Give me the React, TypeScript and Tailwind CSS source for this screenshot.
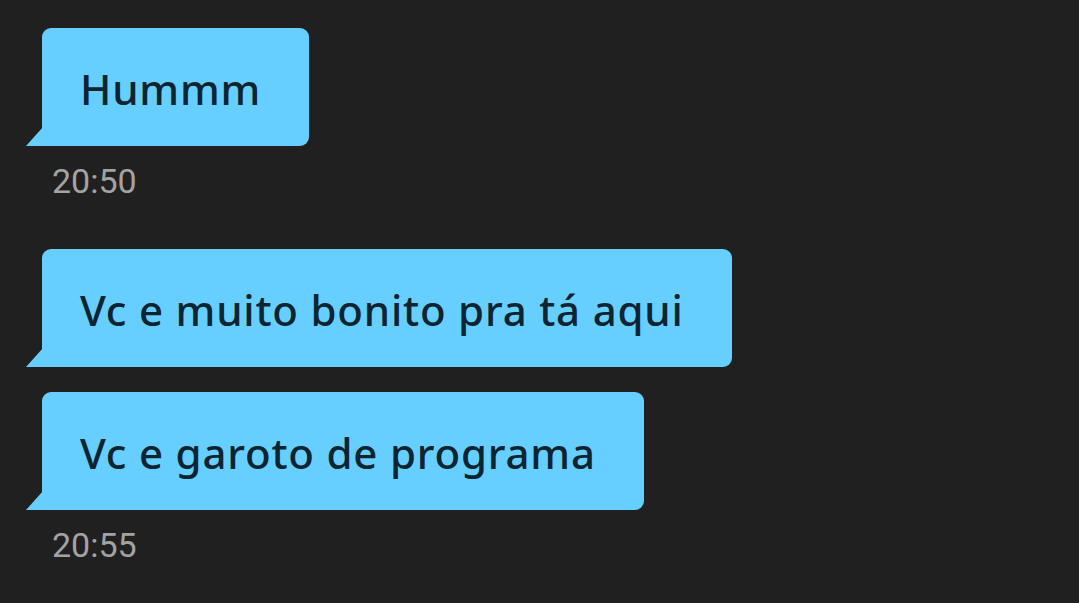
import React from 'react';

const GROUPS = [
  { messages: ['Hummm'], time: '20:50' },
  { messages: ['Vc e muito bonito pra tá aqui', 'Vc e garoto de programa'], time: '20:55' },
];

function Bubble({ text }: { text: string }) {
  return (
    <div className="relative self-start">
      <svg
        className="absolute bottom-0 left-[-16px]"
        width="17"
        height="19"
        viewBox="0 0 17 19"
      >
        <path d="M17 0 L17 19 L0 19 Z" fill="#66cfff" />
      </svg>
      <div className="flex h-[118px] items-center rounded-[9px] rounded-bl-none bg-[#66cfff] pl-[38px] pr-[48px] pt-[2px] text-[42px] font-medium tracking-[0.8px] text-[#0e2430] font-['Noto_Sans',sans-serif]">
        {text}
      </div>
    </div>
  );
}

export default function App() {
  return (
    <div className="h-[603px] w-[1079px] overflow-hidden bg-[#202020] pl-[42px] pt-[28px]">
      <div className="flex flex-col gap-[48px]">
        {GROUPS.map((group) => (
          <div key={group.time} className="flex flex-col">
            <div className="flex flex-col gap-[25px]">
              {group.messages.map((m) => (
                <Bubble key={m} text={m} />
              ))}
            </div>
            <span className="mt-[15px] pl-[10px] text-[34px] leading-[40px] text-[#a3a3a3] font-['Roboto',sans-serif]">
              {group.time}
            </span>
          </div>
        ))}
      </div>
    </div>
  );
}
